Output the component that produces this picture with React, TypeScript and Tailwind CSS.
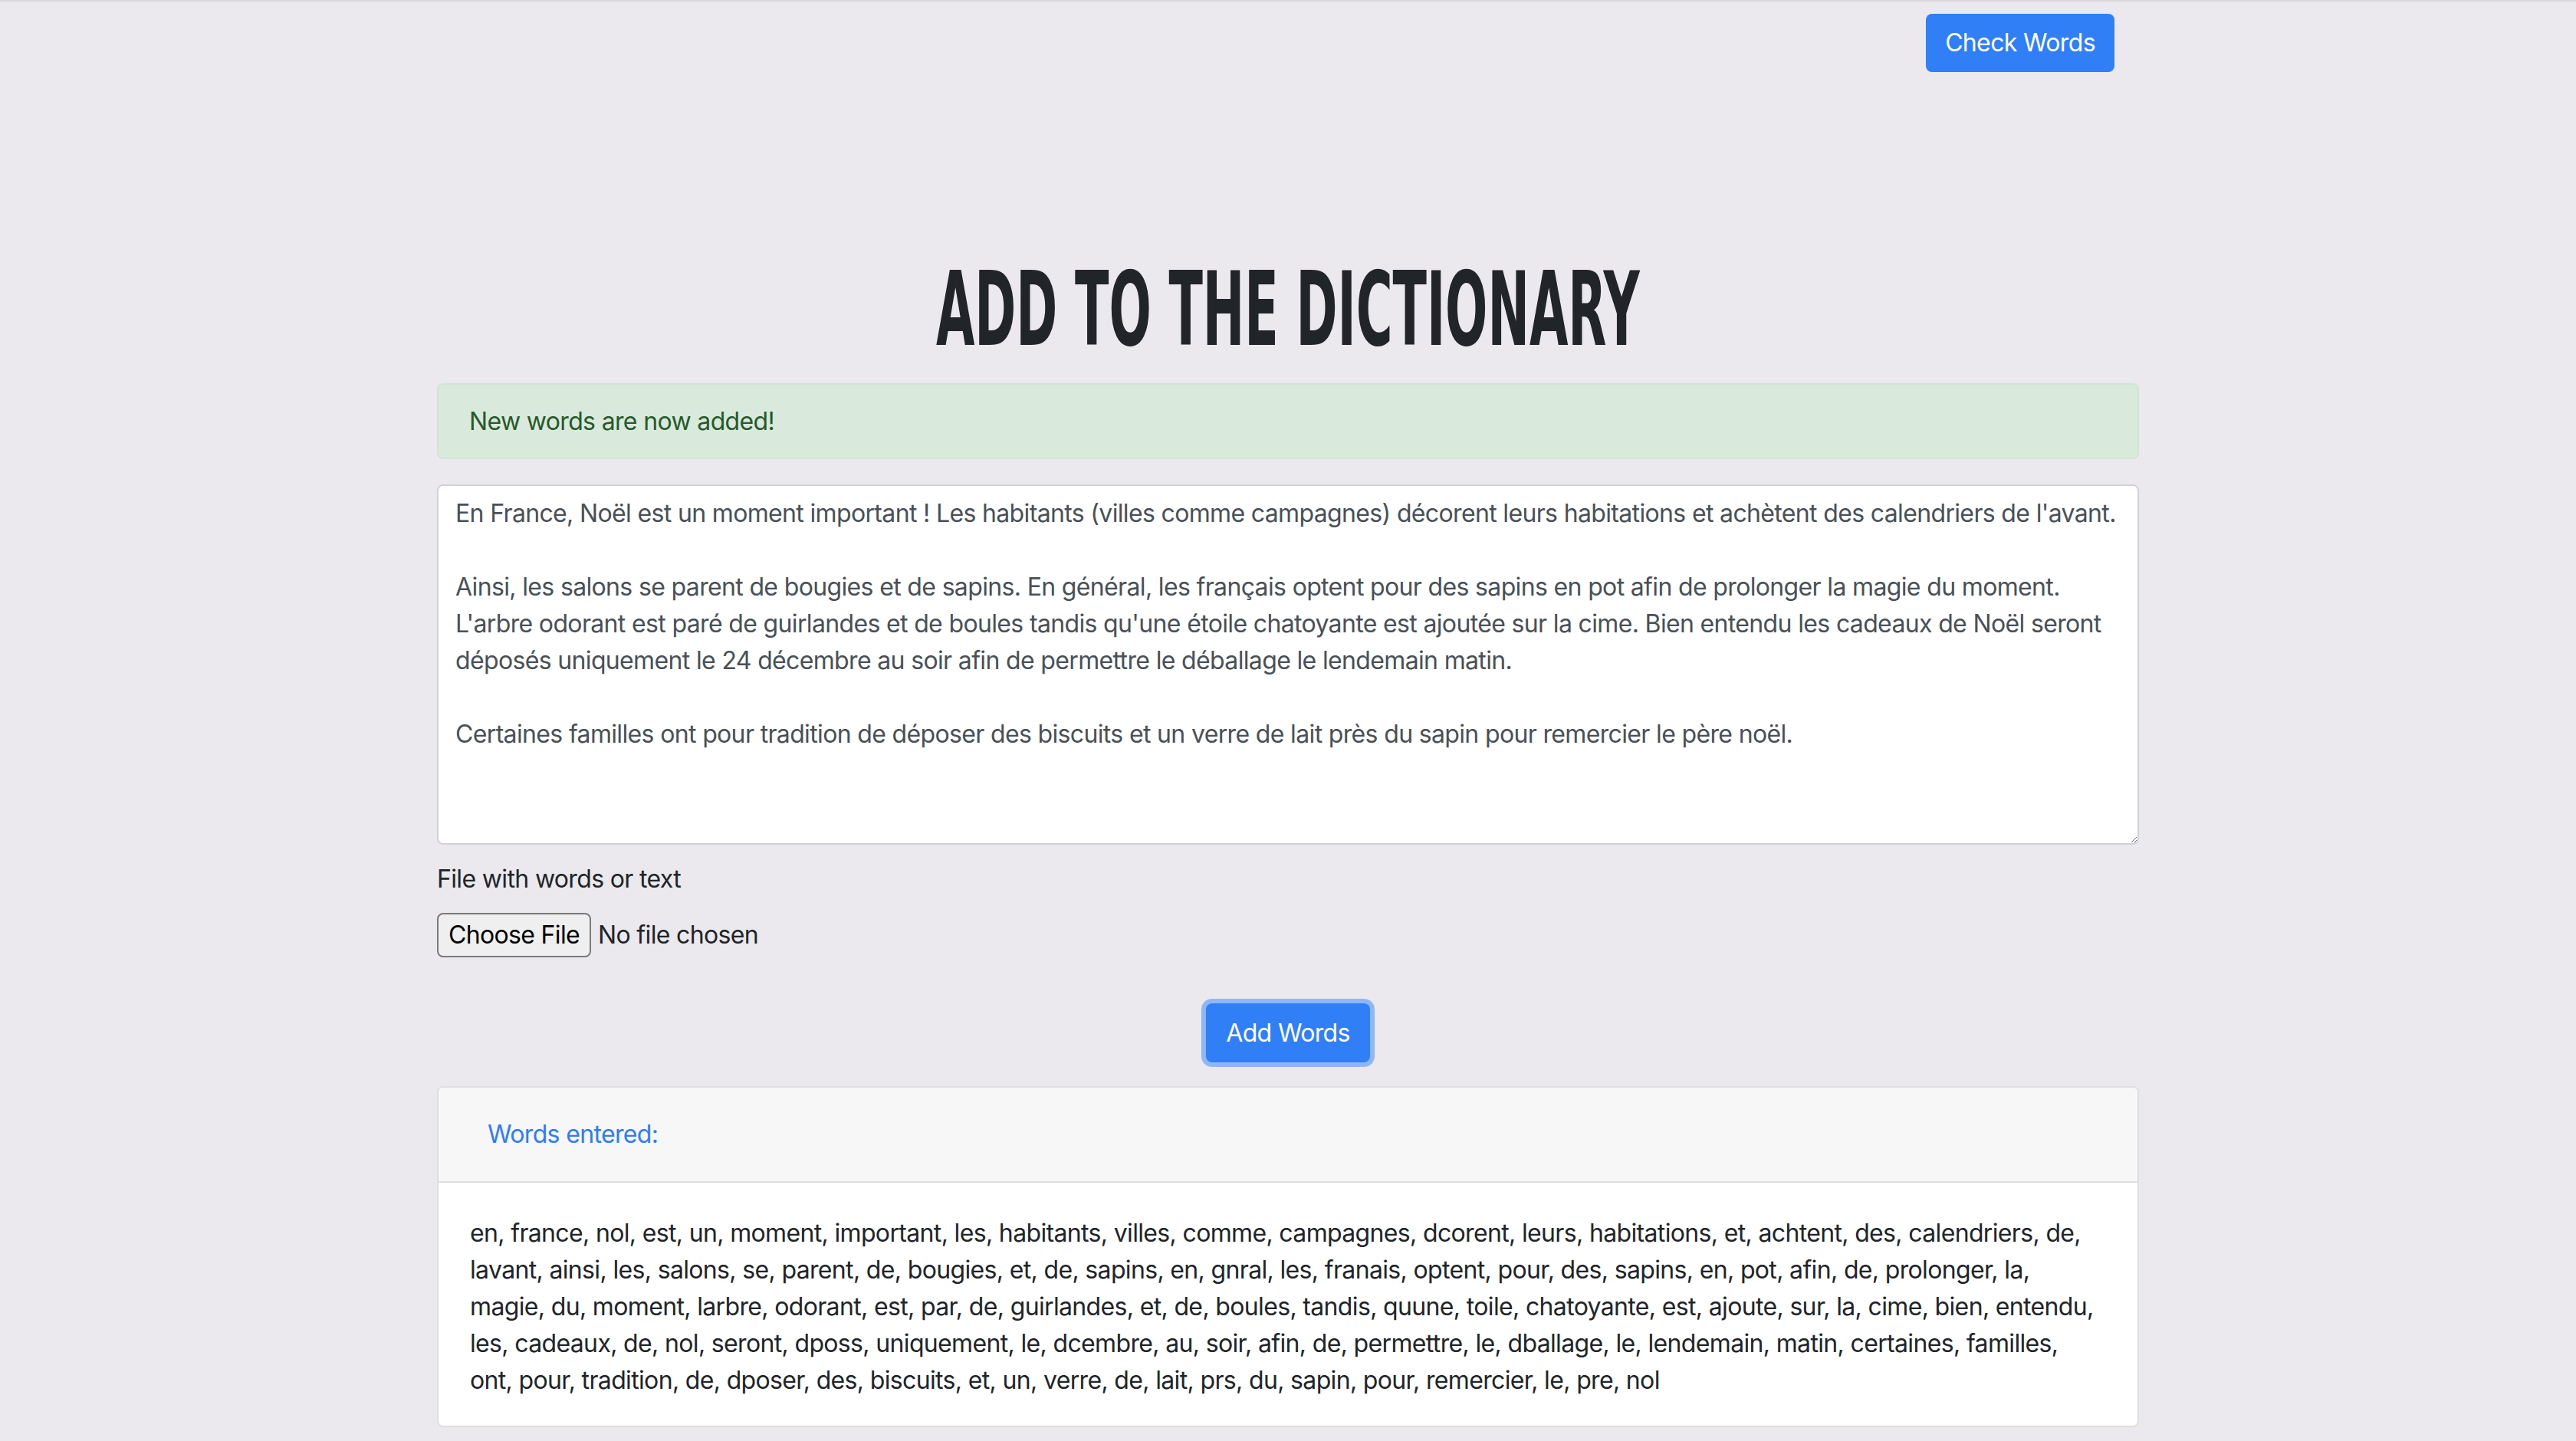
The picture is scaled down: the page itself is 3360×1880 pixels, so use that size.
const textLines = [
    "En France, Noël est un moment important ! Les habitants (villes comme campagnes) décorent leurs habitations et achètent des calendriers de l'avant.",
    "",
    "Ainsi, les salons se parent de bougies et de sapins. En général, les français optent pour des sapins en pot afin de prolonger la magie du moment.",
    "L'arbre odorant est paré de guirlandes et de boules tandis qu'une étoile chatoyante est ajoutée sur la cime. Bien entendu les cadeaux de Noël seront",
    "déposés uniquement le 24 décembre au soir afin de permettre le déballage le lendemain matin.",
    "",
    "Certaines familles ont pour tradition de déposer des biscuits et un verre de lait près du sapin pour remercier le père noël.",
];

const wordLines = [
    "en, france, nol, est, un, moment, important, les, habitants, villes, comme, campagnes, dcorent, leurs, habitations, et, achtent, des, calendriers, de,",
    "lavant, ainsi, les, salons, se, parent, de, bougies, et, de, sapins, en, gnral, les, franais, optent, pour, des, sapins, en, pot, afin, de, prolonger, la,",
    "magie, du, moment, larbre, odorant, est, par, de, guirlandes, et, de, boules, tandis, quune, toile, chatoyante, est, ajoute, sur, la, cime, bien, entendu,",
    "les, cadeaux, de, nol, seront, dposs, uniquement, le, dcembre, au, soir, afin, de, permettre, le, dballage, le, lendemain, matin, certaines, familles,",
    "ont, pour, tradition, de, dposer, des, biscuits, et, un, verre, de, lait, prs, du, sapin, pour, remercier, le, pre, nol",
];

export default function App() {
    return (
        <div className="min-h-screen bg-[#ebe9ee] border-t-2 border-[#d8d8dc] text-[#212529] font-['Inter','Liberation_Sans',sans-serif] text-[32px] leading-[48px] tracking-[-0.65px]">

            {/* top bar */}
            <div className="w-[2220px] mx-auto flex justify-end pt-[16px]">
                <button className="w-[246px] h-[76px] mr-[32px] rounded-[8px] bg-[#307ff6] text-white">
                    Check Words
                </button>
            </div>

            <div className="w-[2220px] mx-auto">

                <h1 className="mt-[243px] mb-[29px] h-[134px] flex justify-center tracking-normal">
                    <span className="inline-block font-['Liberation_Sans_Narrow','DejaVu_Sans_Condensed','Liberation_Sans',sans-serif] font-bold text-[134px] leading-none text-[#212529] scale-x-[0.54] whitespace-nowrap">
                        ADD TO THE DICTIONARY
                    </span>
                </h1>

                <div className="h-[99px] border-2 border-[#cfe6d4] bg-[#d9eadc] rounded-[8px] px-[40px] py-[24px] leading-[47px] text-[#26592c]">
                    New words are now added!
                </div>

                <textarea
                    readOnly
                    className="mt-[33px] block w-full h-[470px] bg-white border-2 border-[#cfd3d8] rounded-[8px] px-[22px] py-[12px] text-[#495057] leading-[48px] outline-none"
                    value={textLines.join("\n")}
                />

                <label className="block mt-[21px] mb-[20px]">File with words or text</label>

                <div className="flex items-center h-[58px]">
                    <span className="h-[58px] w-[201px] flex items-center justify-center border-2 border-[#7a7a7a] rounded-[8px] bg-[#efefef] text-black">
                        Choose File
                    </span>
                    <span className="ml-[9px]">No file chosen</span>
                </div>

                <div className="flex justify-center mt-[60px]">
                    <button className="w-[214px] h-[77px] rounded-[8px] bg-[#307ff6] text-white ring-[6px] ring-[#8fb6f5]">
                        Add Words
                    </button>
                </div>

                <div className="mt-[31px] bg-white border-2 border-[#dedede] rounded-[8px] overflow-hidden">
                    <div className="bg-[#f7f7f7] border-b-2 border-[#dedede] px-[40px] py-[23px]">
                        <div className="h-[76px] px-[24px] flex items-center text-[#2f7cf6]">Words entered:</div>
                    </div>
                    <div className="px-[41px] pt-[42px] pb-[35px]">
                        {wordLines.map((l, i) => (
                            <div key={i} className="whitespace-nowrap">{l}</div>
                        ))}
                    </div>
                </div>

            </div>
        </div>
    );
}
